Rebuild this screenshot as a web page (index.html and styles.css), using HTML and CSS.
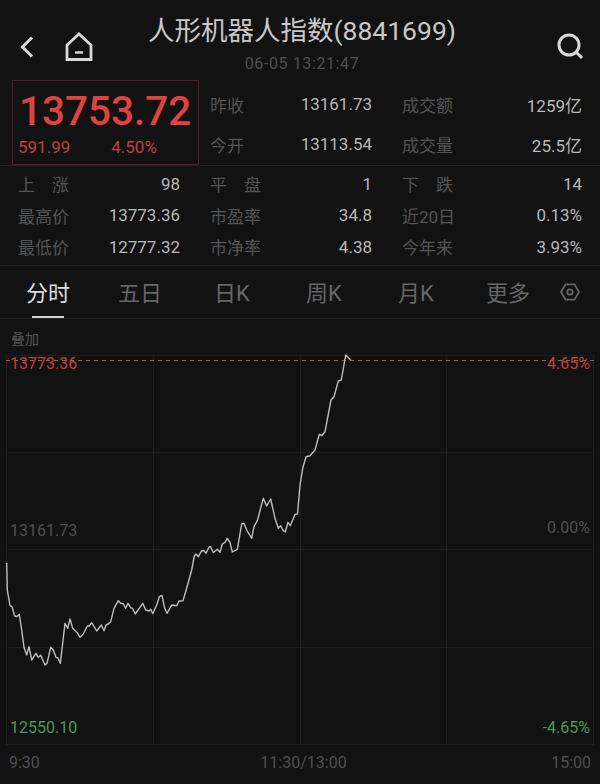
FILE: index.html
```html
<!DOCTYPE html>
<html lang="zh-CN">
<head>
    <meta charset="UTF-8">
    <meta name="viewport" content="width=device-width, initial-scale=1.0">
    <title>人形机器人指数</title>
    <link rel="stylesheet" href="styles.css">
</head>
<body>

    <header class="top-bar">
        <div class="top-left">
            <svg class="icon-back" width="16" height="24" viewBox="0 0 16 24"><path d="M13 2.5 L3.5 12 L13 21.5"/></svg>
            <svg class="icon-home" width="28" height="30" viewBox="0 0 28 30"><path d="M2 27.5 V13 L14 2 L26 13 V27.5 Z"/><path class="home-dash" d="M10 20.5 H18"/></svg>
        </div>
        <div class="top-title">
            <h1 class="name">人形机器人指数(8841699)</h1>
            <div class="time">06-05 13:21:47</div>
        </div>
        <svg class="icon-search" width="30" height="30" viewBox="0 0 30 30"><circle cx="14" cy="13" r="10"/><path d="M21.5 20.5 L27 26"/></svg>
    </header>

    <section class="quote">
        <div class="price-box">
            <div class="price">13753.72</div>
            <div class="change"><span>591.99</span><span>4.50%</span></div>
        </div>
        <div class="quote-rows">
            <div class="pair"><span class="lbl">昨收</span><span class="val">13161.73</span></div>
            <div class="pair"><span class="lbl">成交额</span><span class="val">1259亿</span></div>
            <div class="pair"><span class="lbl">今开</span><span class="val">13113.54</span></div>
            <div class="pair"><span class="lbl">成交量</span><span class="val">25.5亿</span></div>
        </div>
    </section>

    <section class="stats">
        <div class="pair"><span class="lbl spaced"><i>上</i><i>涨</i></span><span class="val">98</span></div>
        <div class="pair"><span class="lbl spaced"><i>平</i><i>盘</i></span><span class="val">1</span></div>
        <div class="pair"><span class="lbl spaced"><i>下</i><i>跌</i></span><span class="val">14</span></div>
        <div class="pair"><span class="lbl">最高价</span><span class="val">13773.36</span></div>
        <div class="pair"><span class="lbl">市盈率</span><span class="val">34.8</span></div>
        <div class="pair"><span class="lbl">近20日</span><span class="val">0.13%</span></div>
        <div class="pair"><span class="lbl">最低价</span><span class="val">12777.32</span></div>
        <div class="pair"><span class="lbl">市净率</span><span class="val">4.38</span></div>
        <div class="pair"><span class="lbl">今年来</span><span class="val">3.93%</span></div>
    </section>

    <nav class="tabs">
        <a class="tab active">分时</a>
        <a class="tab">五日</a>
        <a class="tab">日K</a>
        <a class="tab">周K</a>
        <a class="tab">月K</a>
        <a class="tab">更多</a>
        <svg class="icon-hex" width="20" height="18" viewBox="0 0 22 20"><path d="M6 1.5 H16 L21 10 L16 18.5 H6 L1 10 Z"/><circle cx="11" cy="10" r="3"/></svg>
    </nav>

    <div class="overlay-btn">叠加</div>

    <div class="chart">
        <svg class="chart-svg" width="600" height="392" viewBox="0 353 600 392">
            <g class="grid">
                <rect x="6.5" y="355.5" width="587" height="389"/>
                <path d="M153.5 355 V744 M300.5 355 V744 M446.5 355 V744"/>
                <path d="M6 452.5 H594 M6 549.5 H594 M6 647.5 H594"/>
            </g>
            <path class="high-line" d="M6 360.5 H594"/>
            <polyline class="price-line" points="6.7,563 7.3,590 10,605.7 12,606.7 14.7,616 16.7,616.7 19.3,614.3 21.7,630 24,647.3 26.7,655 29,646.7 31.7,660 36,653.3 38.3,657.3 40.7,655.3 45,665 47,663.3 50.7,647.3 53.3,650 56,657.3 58,658 60.3,663.3 65,623.3 67.7,628.3 70,619 72.7,628.3 77.3,632.7 80,637.3 83.3,634 87.3,626 89.3,626 91.7,622.7 96.7,631 101.3,625 104,630.7 106,625 108.3,624 110.7,621.7 114,608.3 118.3,600.7 120.7,603.3 123.3,603.7 125.7,608.3 128,603.3 130.7,607.7 132.7,608.7 135.3,614 142.7,603.3 145.7,610 149,611 150.7,609.3 152.7,613.7 156.7,605 159.3,596.7 162,595.3 164.7,608.3 167,613.3 171.7,605 176.7,605.7 179,601 183,600.7 186.7,588 191.7,570 194.3,556 196,554 198.3,556.7 201.7,550.7 204,550.7 206,553.3 209.3,546.7 210.7,546.7 213.3,552.7 217.3,549.3 220,552.3 222.3,544 225,542.3 227.3,538.3 230,542.3 232.3,552 237.3,549.3 241.7,524 244,523.3 246.7,530 251.7,538.3 254,526.7 257.3,520.7 263.3,498.3 266.7,506 270.7,499 275,518.3 278.3,528.3 280.7,525.7 283.3,530.7 285.3,532 288,522.3 290.3,525.7 295,514.3 297.5,514 300,485 302.7,468.3 306,456.7 310,455.7 315,450 319.3,434.3 321.7,435.7 325,431.7 331,400 334,396.7 338.3,381 341.3,380 345.7,355 350.7,360"/>
        </svg>
        <span class="axis left up top-tag">13773.36</span>
        <span class="axis right up top-tag">4.65%</span>
        <span class="axis left flat mid-tag">13161.73</span>
        <span class="axis right flat mid-tag">0.00%</span>
        <span class="axis left down low-tag">12550.10</span>
        <span class="axis right down low-tag">-4.65%</span>
    </div>

    <footer class="time-axis">
        <span>9:30</span>
        <span class="noon">11:30/13:00</span>
        <span>15:00</span>
    </footer>

</body>
</html>
```

FILE: styles.css
```css
html, body {
    margin: 0;
    padding: 0;
    height: 100%;
    overflow: hidden;
}
body {
    background-color: #121213;
    color: #c4c4c4;
    font-family: Roboto, "Noto Sans CJK SC", sans-serif;
}

/* Barra superior */
.top-bar {
    height: 80px;
    display: grid;
    grid-template-columns: 1fr auto 1fr;
    box-sizing: border-box;
    padding: 15px 15px 0 19px;
}
.top-left {
    display: flex;
    align-items: center;
    gap: 30px;
    height: 64px;
}
.top-left svg, .icon-search, .icon-hex {
    fill: none;
    stroke: #d8d8d8;
}
.icon-back { stroke-width: 3; }
.icon-home { stroke-width: 2.8; }
.home-dash { stroke-width: 2.4; }
.icon-search {
    stroke-width: 3;
    justify-self: end;
    margin-top: 17px;
}
.top-title { text-align: center; }
.name {
    margin: 0;
    font-size: 26.5px;
    font-weight: 400;
    line-height: 32px;
    color: #c8c8c8;
}
.time {
    margin-top: 7px;
    font-size: 16px;
    letter-spacing: 0.6px;
    line-height: 20px;
    color: #505050;
}

/* Cotización */
.quote {
    display: flex;
    padding-left: 12px;
}
.price-box {
    width: 187px;
    height: 85px;
    box-sizing: border-box;
    border: 1px solid #4b2224;
    padding: 0 6px;
}
.price {
    font-size: 40.5px;
    font-weight: 500;
    line-height: 60px;
    color: #e0423f;
}
.change {
    display: flex;
    gap: 41px;
    margin: -4px 0 0 -1px;
    font-size: 17px;
    line-height: 20px;
    color: #bf423f;
}
.pair {
    display: flex;
    justify-content: space-between;
    align-items: center;
}
.quote-rows {
    display: grid;
    grid-template-columns: 162px 180px;
    grid-auto-rows: 40px;
    column-gap: 30px;
    margin-left: 11px;
    padding-top: 4px;
}
.lbl {
    font-size: 17px;
    color: #545454;
}
.val {
    font-size: 17px;
    color: #b8b8b8;
}
.stats {
    display: grid;
    grid-template-columns: 162px 162px 180px;
    grid-auto-rows: 31.5px;
    column-gap: 30px;
    height: 101px;
    box-sizing: border-box;
    padding: 2px 18px 0;
    border-top: 1px solid #232324;
    border-bottom: 1px solid #232324;
}
.spaced {
    display: flex;
    justify-content: space-between;
    width: 51px;
}
.spaced i { font-style: normal; }

/* Pestañas */
.tabs {
    display: flex;
    align-items: center;
    height: 52px;
    box-sizing: content-box;
    padding-left: 2px;
    border-bottom: 1px solid #232324;
    position: relative;
}
.tab {
    width: 92px;
    margin-top: -2px;
    text-align: center;
    font-size: 22px;
    color: #666666;
}
.tab.active { color: #dcdcdc; }
.tab.active::after {
    content: "";
    position: absolute;
    left: 32px;
    bottom: 0;
    width: 32px;
    height: 2px;
    background-color: #d0d0d0;
}
.icon-hex {
    stroke: #666666;
    stroke-width: 2;
    margin-left: 6px;
}

.overlay-btn {
    padding: 9px 0 0 11px;
    font-size: 14px;
    line-height: 22px;
    height: 25px;
    color: #545454;
}

/* Gráfico */
.chart {
    position: relative;
    height: 392px;
}
.chart-svg { display: block; }
.grid {
    fill: none;
    stroke: #1e1e1f;
    stroke-width: 1;
}
.high-line {
    stroke: #a8603f;
    stroke-width: 1;
    stroke-dasharray: 4 4;
}
.price-line {
    fill: none;
    stroke: #bdbdbd;
    stroke-width: 1.4;
    stroke-linejoin: round;
}
.axis {
    position: absolute;
    font-size: 16px;
    line-height: 18px;
}
.axis.left { left: 10px; }
.axis.right { right: 10px; }
.up { color: #bf403d; }
.flat { color: #505050; }
.down { color: #4a9a56; }
.top-tag { top: 2px; }
.mid-tag { top: 169px; }
.axis.right.mid-tag { top: 166px; }
.low-tag { top: 366px; }

.time-axis {
    display: flex;
    justify-content: space-between;
    padding: 8px 9px 0;
    font-size: 16px;
    line-height: 20px;
    color: #505050;
}
.noon { margin-left: 16px; }
```
